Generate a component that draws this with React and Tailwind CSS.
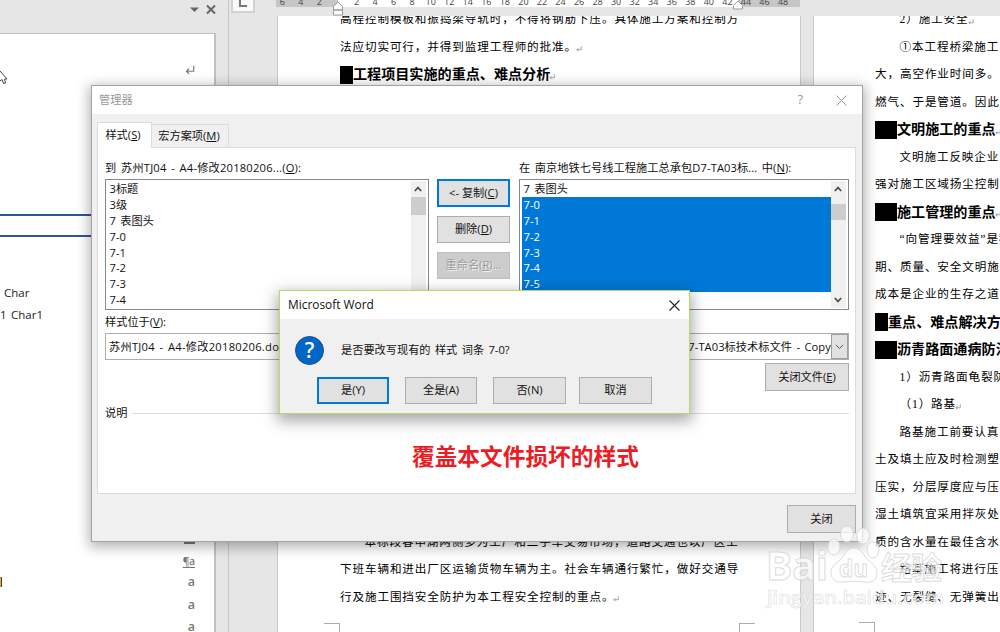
import clsx from "clsx";

const rulerMarks = [6, 4, 2, "", 2, 4, 6, 8, 10, 12, 14, 16, 18, 20, 22, 24, 26, 28, 30, 32, 34, 36, 38, 40, 42, 44, 46, 48];

const pageOneTop = [
  { text: "高程控制模板和振捣梁导轨时，不得将钢筋下压。具体施工方案和控制方" },
  { text: "法应切实可行，并得到监理工程师的批准。", end: true },
  { text: "工程项目实施的重点、难点分析", heading: "w-[13px]", end: true },
];

const pageOneBottom = [
  { text: "本标段春申湖两侧多为工厂和二手车交易市场，道路交通也以厂区上", indent: true },
  { text: "下班车辆和进出厂区运输货物车辆为主。社会车辆通行繁忙，做好交通导" },
  { text: "行及施工围挡安全防护为本工程安全控制的重点。", end: true },
];

const pageTwo = [
  { text: "2）施工安全", indent: true, end: true },
  { text: "①本工程桥梁施工", indent: true },
  { text: "大，高空作业时间多。" },
  { text: "燃气、于是管道。因此在" },
  { text: "文明施工的重点", heading: "w-[22px]", end: true },
  { text: "文明施工反映企业", indent: true },
  { text: "强对施工区域扬尘控制" },
  { text: "施工管理的重点", heading: "w-[22px]", end: true },
  { text: "“向管理要效益”是我", indent: true },
  { text: "期、质量、安全文明施" },
  { text: "成本是企业的生存之道" },
  { text: "重点、难点解决方案", heading: "w-[13px]" },
  { text: "沥青路面通病防治", heading: "w-[22px]" },
  { text: "1）沥青路面龟裂防", indent: true },
  { text: "（1）路基", indent: true, end: true },
  { text: "路基施工前要认真", indent: true },
  { text: "土及填土应及时检测塑限" },
  { text: "压实，分层厚度应与压实" },
  { text: "湿土填筑宜采用拌灰处" },
  { text: "质的含水量在最佳含水率" },
  { text: "路基施工将进行压实", indent: true },
  { text: "迹、无裂缝、无弹簧出现" },
];

function ReturnMark({ className }) {
  return (
    <svg viewBox="0 0 8 8" className={clsx("shrink-0", className)} fill="none" stroke="#777" strokeWidth="0.9">
      <path d="M7 0.5V5H1.2M3.2 3L1.2 5l2 2" />
    </svg>
  );
}

function Line({ text, heading, indent, end }) {
  return (
    <div className={clsx("flex h-[27.5px] items-center whitespace-nowrap", indent && "pl-[24.5px]")}>
      {heading && <span className={clsx("h-[18px] shrink-0 bg-black", heading)} />}
      <span className={heading ? "text-[14.1px] font-bold text-black" : "text-[11.6px] tracking-[0.88px] text-black"}>
        {text}
      </span>
      {end && <ReturnMark className="mt-1 -ml-px size-[6px]" />}
    </div>
  );
}

function Key({ label, hot, after = "" }) {
  return (
    <span className="whitespace-pre">
      {label}(<span className="underline underline-offset-1">{hot}</span>){after}
    </span>
  );
}

function Button({ children, className, primary, disabled }) {
  return (
    <button
      className={clsx(
        "flex shrink-0 items-center justify-center",
        primary ? "border-2 border-[#0078d7]" : "border border-[#adadad]",
        disabled ? "border-[#bfbfbf] bg-[#cccccc] text-[#9b9b9b] [text-shadow:1px_1px_0_#f4f4f4]" : "bg-[#e1e1e1]",
        className
      )}
    >
      {children}
    </button>
  );
}

function Arrow({ down }) {
  return (
    <svg viewBox="0 0 14 16" className="h-4 w-3.5 shrink-0" fill="none" stroke="#505050" strokeWidth="1.8">
      <path d={down ? "M3.8 6L7 9.4 10.2 6" : "M3.8 10L7 6.6 10.2 10"} />
    </svg>
  );
}

function ListBox({ items, className, selected, thumb }) {
  return (
    <div className={clsx("flex h-[131px] border border-[#828790] bg-white p-px", className)}>
      <div className="flex-1 overflow-hidden pl-px">
        {items.map((item) => (
          <div
            key={item}
            className={clsx("h-[15.9px] pl-[1.5px] leading-[16px]", selected.includes(item) && "bg-[#0078d7] text-white")}
          >
            {item}
          </div>
        ))}
      </div>
      <div className="mr-px flex w-[15px] flex-col bg-[#f0f0f0]">
        <Arrow />
        <div className={clsx("bg-[#cdcdcd]", thumb)} />
        <div className="flex-1" />
        <Arrow down />
      </div>
    </div>
  );
}

function StylesPane() {
  return (
    <div className="flex w-[229px] shrink-0 flex-col border-r border-[#c6c6c6] pr-[12px]">
      <div className="flex h-[33px] shrink-0 justify-end gap-[7px] pt-[4px]">
        <svg viewBox="0 0 9 11" className="h-[11px] w-[9px]" fill="#666"><path d="M0 3.5h9L4.500 8z" /></svg>
        <svg viewBox="0 0 10 11" className="h-[11px] w-[10px]" fill="none" stroke="#666" strokeWidth="2"><path d="M1 1.500l8 8M9 1.500l-8 8" /></svg>
      </div>
      <div className="flex h-[599px] shrink-0 flex-col overflow-hidden border-t border-r-2 border-[#c1c1c1] bg-white text-[11.5px] text-[#222]">
        <div className="flex h-[51px] shrink-0 items-start justify-between pt-[31px]">
          <svg viewBox="0 0 8 17" className="mt-[4px] h-[17px] w-[8px] shrink-0" fill="#fff" stroke="#444" strokeWidth="1">
            <path d="M0 2l7 8H4.500l1 4-2 .5-1.500-4L0 12" />
          </svg>
          <ReturnMark className="mr-[19px] size-[10px]" />
        </div>
        <div className="mt-[129px] h-[23px] shrink-0 border-y-2 border-[#2b579a]" />
        <div className="mt-[45px] h-[22px] shrink-0 pl-[4px] leading-[22px]">Char</div>
        <div className="h-[22px] shrink-0 leading-[22px]">1 Char1</div>
        <div className="mt-[200px] flex shrink-0 flex-col pr-[19px] text-right text-[12.500px] leading-[22.500px] font-semibold text-[#777]">
          <div className="ml-auto h-[18px] w-[11px] border-b-2" />
          <div className="mt-[5px] h-[22px] text-[10px] leading-[24px] underline underline-offset-2">¶a</div>
          <div className="flex items-center justify-between">
            <span className="h-[10px] w-[2px] border-r border-[#444] bg-[#f0a030]" />
            <span>a</span>
          </div>
          <div>a</div>
          <div>a</div>
        </div>
      </div>
    </div>
  );
}

function PageOne() {
  return (
    <div className="w-[524px] shrink-0 overflow-hidden border-x border-[#c9c9c9] bg-white pl-[62px]">
      <div className="-mt-[10px]">
        {pageOneTop.map((line) => <Line key={line.text} {...line} />)}
      </div>
      <div className="h-[440px]" />
      {pageOneBottom.map((line) => <Line key={line.text} {...line} />)}
      <div className="-ml-[16px] mt-[12px] flex w-[431px] justify-between">
        <span className="h-4 w-[16px] border-t border-r border-[#aaa]" />
        <span className="h-4 w-[16px] border-t border-l border-[#aaa]" />
      </div>
    </div>
  );
}

function Editor() {
  return (
    <div className="flex flex-1 flex-col overflow-hidden">
      <div className="flex h-[16px] shrink-0">
        <div className="ml-[2px] flex h-[13px] w-[24px] shrink-0 justify-center border-2 border-t-0 border-[#d2d2d2] bg-[#fafafa]">
          <span className="h-[7px] w-[8px] border-b-2 border-l-2 border-[#777]" />
        </div>
        <div className="relative ml-[21px] flex h-[7px] w-[524px] shrink-0 bg-[#c6c6c6]">
          <div className="ml-[62px] w-[400px] bg-white" />
          <div className="absolute -top-[4px] -left-[3px] flex text-[9px] leading-[11px] text-[#444]">
            {rulerMarks.map((mark, i) => (
              <span key={i} className="w-[18.550px] text-center">{mark}</span>
            ))}
          </div>
          <svg viewBox="0 0 12 15" className="absolute top-[1px] left-[56px] h-[15px] w-[12px]" fill="#fff" stroke="#999">
            <path d="M1.500 5.500L6 1l4.500 4.500V9h-9zM1.500 9h9v5h-9z" />
          </svg>
          <svg viewBox="0 0 12 10" className="absolute top-0 left-[456px] h-[10px] w-[12px]" fill="#fff" stroke="#999">
            <path d="M1.500 5.500L6 1l4.500 4.500V9h-9z" />
          </svg>
        </div>
      </div>
      <div className="flex flex-1 gap-[12px] overflow-hidden pl-[48px] font-['Liberation_Serif','Noto_Sans_CJK_SC',sans-serif]">
        <PageOne />
        <div className="w-[187px] shrink-0 overflow-hidden border-l border-[#c9c9c9] bg-white pl-[61px]">
          <div className="-mt-[10px]">
            {pageTwo.map((line) => <Line key={line.text} {...line} />)}
          </div>
          <div className="-ml-[16px] mt-[11px] h-4 w-[16px] border-t border-r border-[#aaa]" />
        </div>
      </div>
    </div>
  );
}

function Organizer() {
  return (
    <div className="absolute top-[85px] left-[91px] flex h-[457px] w-[772px] flex-col border border-[#a3a3a3] bg-[#f0f0f0] shadow-[0_3px_12px_2px_rgba(0,0,0,0.3)]">
      <div className="flex h-[28px] shrink-0 items-center bg-white pl-[7px] text-[#999]">
        <span className="flex-1">管理器</span>
        <span className="mr-[33px] text-[13px]">?</span>
        <svg viewBox="0 0 11 11" className="mr-[15px] size-[11px]" stroke="#999"><path d="M.5.5l10 10M10.500.5l-10 10" /></svg>
      </div>

      <div className="ml-[5px] mt-[8px] flex h-[25px] shrink-0 items-end">
        <div className="relative z-10 -mb-px flex h-[26px] w-[55px] items-center justify-center border border-b-0 border-[#dcdcdc] bg-white pr-[3px]">
          <Key label="样式" hot="S" />
        </div>
        <div className="flex h-[23px] w-[77px] items-center justify-center border border-l-0 border-b-0 border-[#dcdcdc] pr-[2px]">
          <Key label="宏方案项" hot="M" />
        </div>
      </div>

      <div className="ml-[5px] flex h-[347px] w-[759px] shrink-0 flex-col border border-[#dcdcdc] bg-white pl-[7px]">
        <div className="flex">
          <div className="w-[324px]">
            <div className="h-[31px] pt-[11px] leading-[18px] tracking-[0.200px]"><Key label="到 苏州TJ04 - A4-修改20180206..." hot="O" after=":" /></div>
            <ListBox
              items={["3标题", "3级", "7 表图头", "7-0", "7-1", "7-2", "7-3", "7-4"]}
              selected={[]}
              thumb="h-[18px]"
            />
            <div className="h-[23px] leading-[24px]"><Key label="样式位于" hot="V" after=":" /></div>
            <div className="h-[27px] border border-[#adadad] pl-[3px] leading-[25px] tracking-[0.250px] whitespace-nowrap">苏州TJ04 - A4-修改20180206.docx</div>
          </div>

          <div className="mt-[31px] ml-[8px] flex w-[74px] flex-col gap-[9px]">
            <Button primary className="h-[28px] w-[73px]"><Key label="<- 复制" hot="C" /></Button>
            <Button className="h-[27px] w-[73px]"><Key label="删除" hot="D" /></Button>
            <Button disabled className="h-[27px] w-[73px]"><Key label="重命名" hot="R" after="..." /></Button>
          </div>

          <div className="ml-[8px] w-[330px]">
            <div className="h-[31px] pt-[11px] leading-[18px] tracking-[0.070px] whitespace-nowrap"><Key label="在 南京地铁七号线工程施工总承包D7-TA03标... 中" hot="N" after=":" /></div>
            <ListBox
              items={["7 表图头", "7-0", "7-1", "7-2", "7-3", "7-4", "7-5"]}
              selected={["7-0", "7-1", "7-2", "7-3", "7-4", "7-5"]}
              thumb="mt-[7px] h-[16px]"
            />
            <div className="mt-[23px] flex h-[27px] border border-[#adadad]">
              <div className="flex-1 overflow-hidden pl-[3px] leading-[25px] tracking-[0.040px] whitespace-nowrap">南京地铁七号线工程施工总承包D7-TA03标技术标文件 - Copy</div>
              <div className="flex w-[17px] shrink-0 items-center justify-center border border-[#a0a0a0] bg-[#e1e1e1]">
                <svg viewBox="0 0 9 6" className="h-[6px] w-[9px]" fill="none" stroke="#555"><path d="M.8.8l3.700 3.700L8.200.8" /></svg>
              </div>
            </div>
            <Button className="mt-[3px] ml-auto h-[28px] w-[84px]"><Key label="关闭文件" hot="E" /></Button>
          </div>
        </div>

        <div className="mt-[12px] mr-[6px] flex h-[20px] items-center gap-[5px]">
          <span>说明</span>
          <span className="h-px flex-1 bg-[#dcdcdc]" />
        </div>
        <div className="mt-[21px] pl-[307px] text-[22.700px] leading-[26px] font-bold text-[#ed1c24]">覆盖本文件损坏的样式</div>
      </div>
      <Button className="mt-[11px] mr-[6px] ml-auto h-[28px] w-[69px]">关闭</Button>
    </div>
  );
}

function MessageBox() {
  return (
    <div className="absolute top-[290px] left-[279px] flex h-[124px] w-[411px] flex-col border border-[#b4dc64] bg-[#f0f0f0] shadow-[0_5px_14px_2px_rgba(0,0,0,0.35)]">
      <div className="flex h-[28px] shrink-0 items-center justify-between bg-white pr-[9px] pl-[8px]">
        <span className="text-[11.900px] [word-spacing:0]">Microsoft Word</span>
        <svg viewBox="0 0 11 11" className="size-[11px]" stroke="#222" strokeWidth="1.100"><path d="M.5.5l10 10M10.500.5l-10 10" /></svg>
      </div>
      <div className="mt-[16px] ml-[15px] flex h-[30px] items-center gap-[17px]">
        <div className="flex size-[29px] items-center justify-center rounded-full border border-[#1d4f80] bg-[#0067c8] text-[21px] leading-none font-semibold text-white">?</div>
        <span>是否要改写现有的 样式 词条 7-0?</span>
      </div>
      <div className="mt-[12px] ml-[37px] flex">
        <Button primary className="h-[27px] w-[72px]">是(Y)</Button>
        <Button className="ml-[16px] h-[27px] w-[72px]">全是(A)</Button>
        <Button className="ml-[16px] h-[27px] w-[73px]">否(N)</Button>
        <Button className="ml-[13px] h-[27px] w-[73px]">取消</Button>
      </div>
    </div>
  );
}

function Watermark() {
  return (
    <svg
      viewBox="0 0 200 100"
      className="absolute top-[520px] left-[760px] h-[100px] w-[200px] font-['Open_Sans','Noto_Sans_CJK_SC',sans-serif]"
      fill="#fff"
      fillOpacity="0.72"
      stroke="#d0d0d0"
      strokeOpacity="0.75"
      strokeWidth="1"
    >
      <text x="6" y="60" fontSize="39" fontWeight="700" textLength="62" lengthAdjust="spacingAndGlyphs">Bai</text>
      <ellipse cx="74" cy="27" rx="6" ry="8" />
      <ellipse cx="87" cy="14" rx="6.500" ry="8" />
      <ellipse cx="103" cy="16" rx="6.500" ry="8" />
      <ellipse cx="113" cy="30" rx="6" ry="8" />
      <path d="M94 28c-7 0-9 7-14 12-6 5-10 8-9 14 1 7 7 9 13 8 7-1 13-1 20 0 7 1 13-1 13-9 0-6-4-9-9-13-5-5-7-12-14-12z" />
      <text x="79" y="57" fontSize="24" fontWeight="700" textLength="29" lengthAdjust="spacingAndGlyphs">du</text>
      <text x="121" y="59" fontSize="31" fontWeight="700" textLength="61">经验</text>
      <text x="7" y="84" fontSize="18" fontWeight="600" strokeWidth="0.6" textLength="177" lengthAdjust="spacingAndGlyphs">jingyan.baidu.com</text>
    </svg>
  );
}

export default function App() {
  return (
    <div className="relative flex h-[632px] w-[1000px] overflow-hidden bg-[#e6e6e6] font-['Open_Sans','Noto_Sans_CJK_SC',sans-serif] text-[11.2px] text-[#111] [word-spacing:1.500px]">
      <StylesPane />
      <Editor />
      <Organizer />
      <MessageBox />
      <Watermark />
    </div>
  );
}
